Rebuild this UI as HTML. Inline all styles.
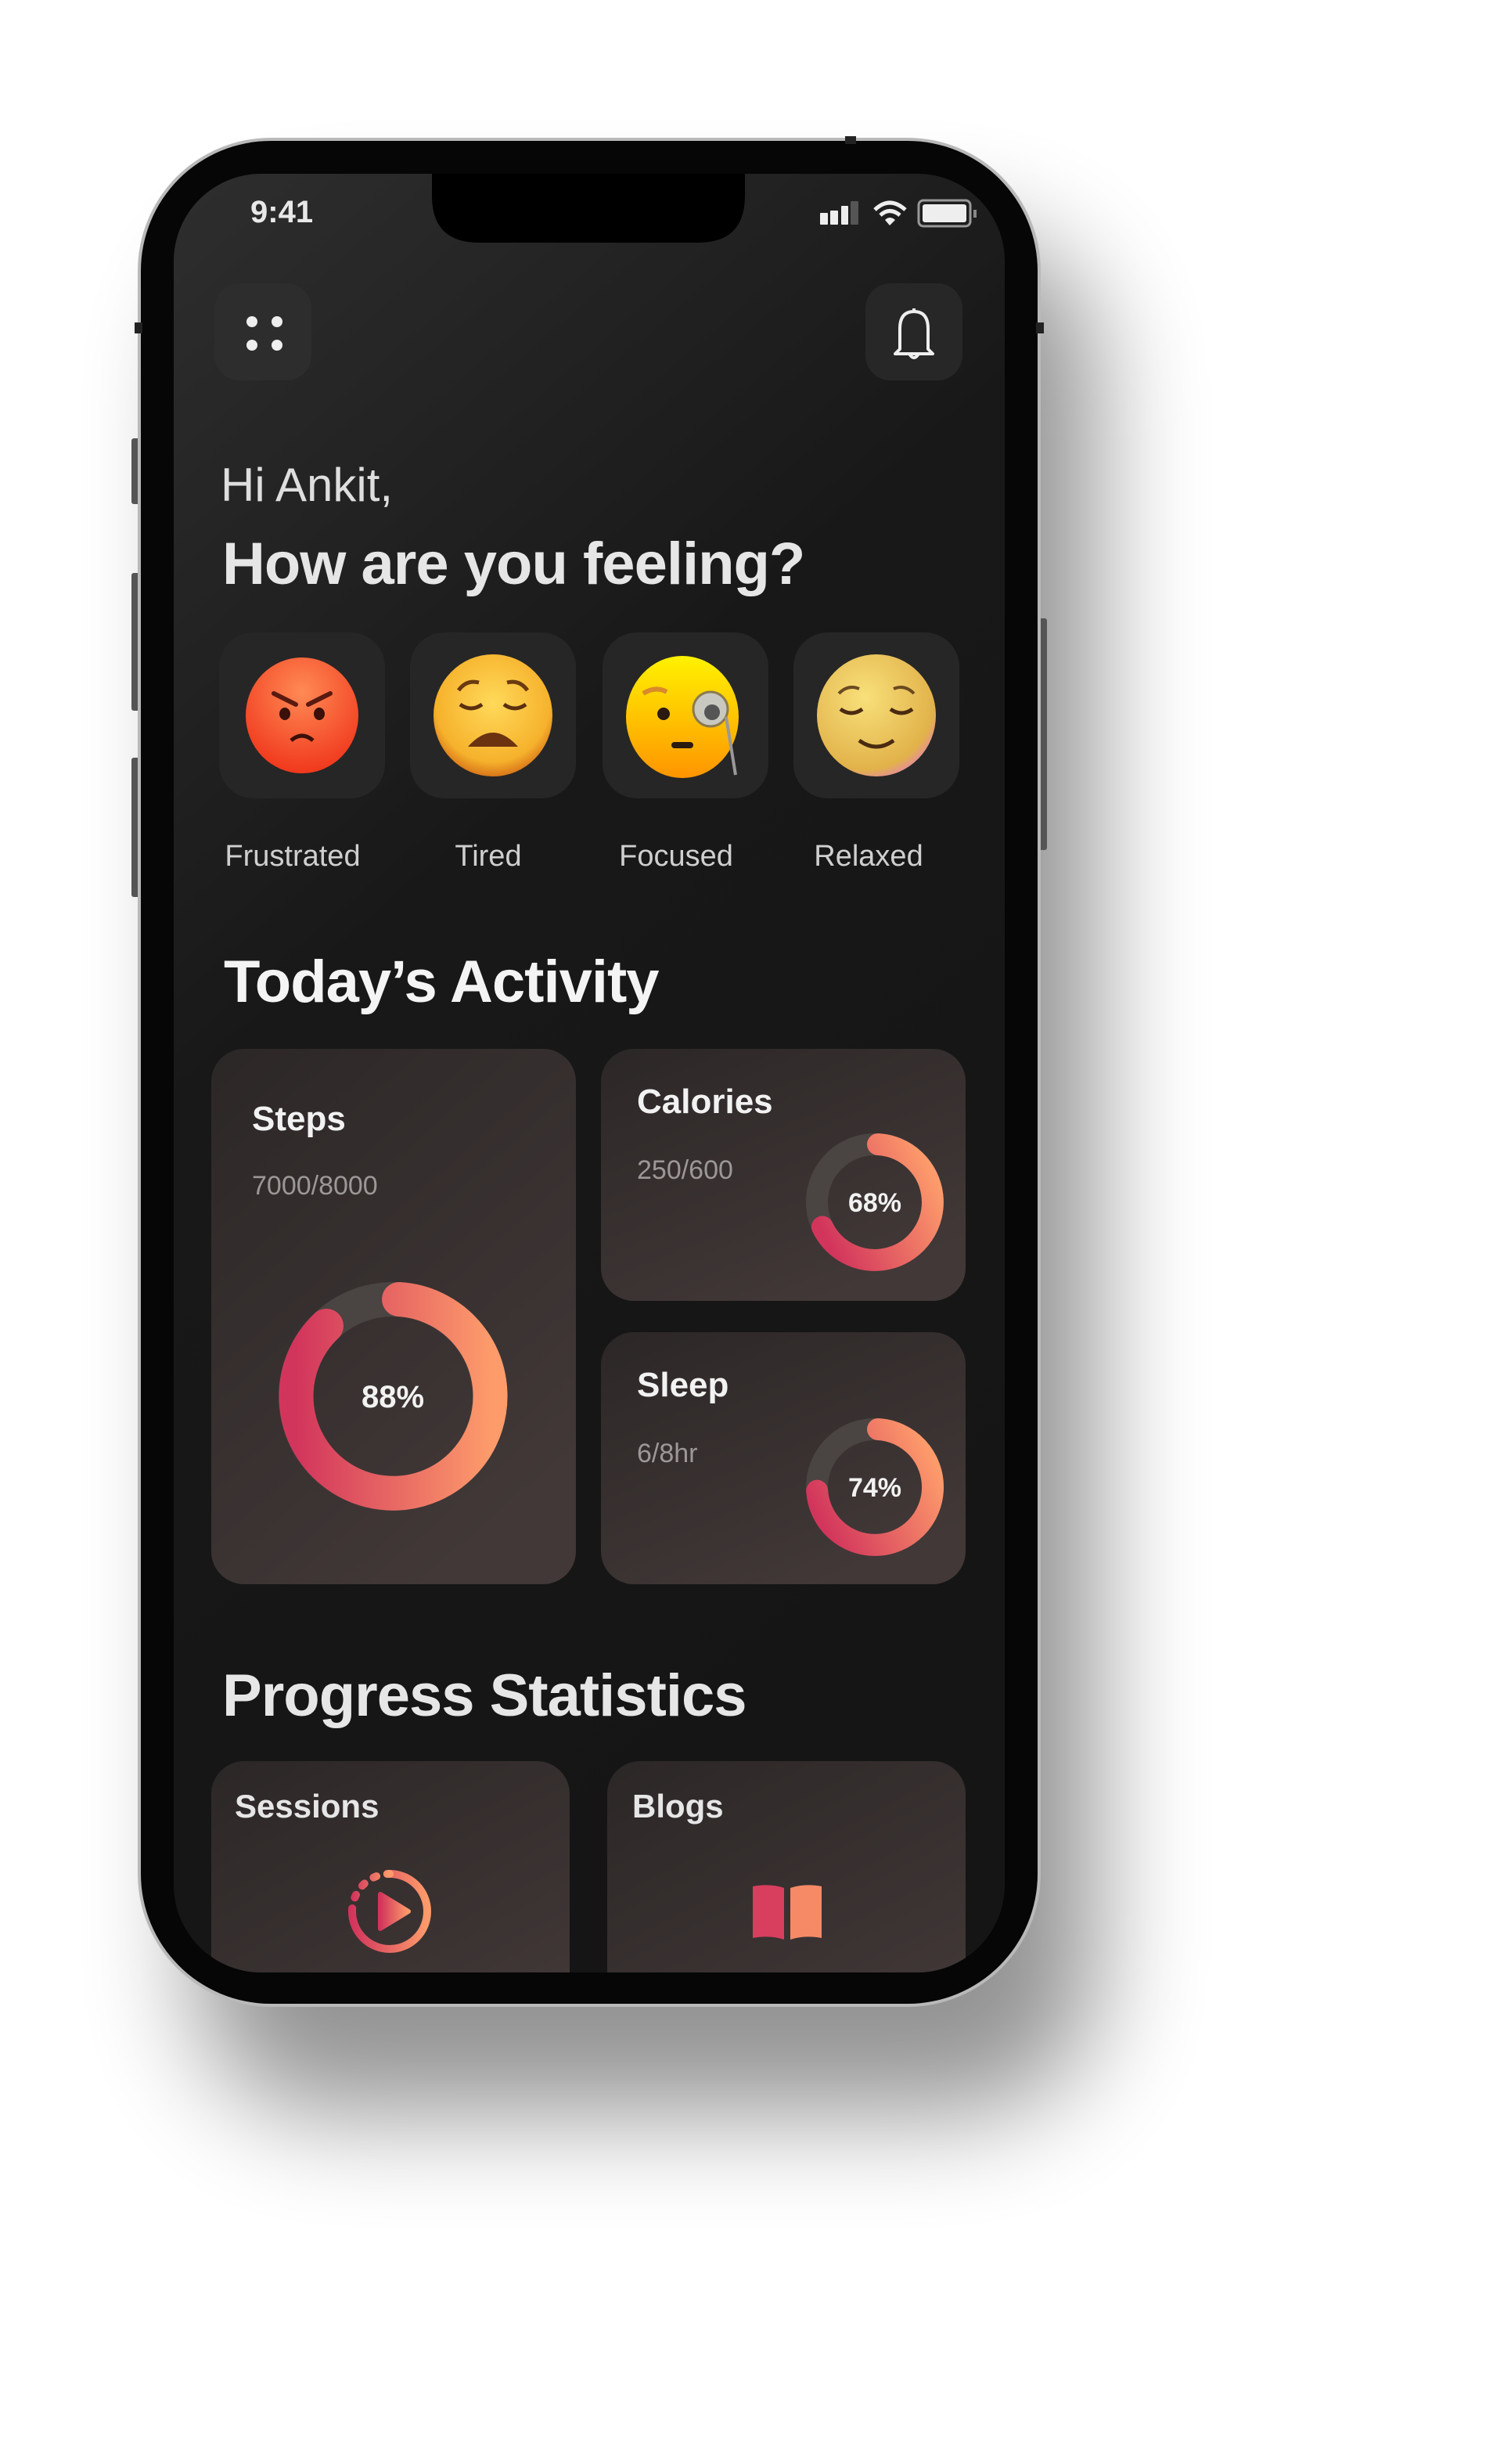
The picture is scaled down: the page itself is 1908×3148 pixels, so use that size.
<!DOCTYPE html>
<html><head><meta charset="utf-8"><style>html,body{margin:0;padding:0;background:#fff;width:1908px;height:3148px;overflow:hidden}svg{display:block}</style></head>
<body>
<svg width="1908" height="3148" viewBox="0 0 1908 3148" xmlns="http://www.w3.org/2000/svg" font-family="'Liberation Sans', sans-serif">
<defs>
<filter id="sh" x="-40%" y="-30%" width="200%" height="180%"><feGaussianBlur stdDeviation="70"/></filter>
<linearGradient id="scr" x1="0" y1="0" x2="0.4" y2="1"><stop offset="0" stop-color="#2e2e2e"/><stop offset="0.45" stop-color="#181818"/><stop offset="1" stop-color="#151515"/></linearGradient>
<linearGradient id="card" x1="0" y1="0" x2="0.6" y2="1"><stop offset="0" stop-color="#2c2727"/><stop offset="1" stop-color="#413837"/></linearGradient>
<linearGradient id="rg" x1="0" y1="0" x2="1" y2="0"><stop offset="0" stop-color="#d2355c"/><stop offset="1" stop-color="#fd9b6b"/></linearGradient>
<linearGradient id="rg2" x1="0" y1="0.75" x2="1" y2="0.25"><stop offset="0" stop-color="#d2355c"/><stop offset="1" stop-color="#fd9b6b"/></linearGradient>
<radialGradient id="ang" cx="0.5" cy="0.3" r="0.7"><stop offset="0" stop-color="#ff8a55"/><stop offset="1" stop-color="#f0381c"/></radialGradient>
<radialGradient id="tir" cx="0.5" cy="0.4" r="0.6"><stop offset="0" stop-color="#ffd95a"/><stop offset="0.8" stop-color="#f6b22c"/><stop offset="1" stop-color="#d9761a"/></radialGradient>
<linearGradient id="foc" x1="0" y1="0" x2="0" y2="1"><stop offset="0" stop-color="#fff200"/><stop offset="1" stop-color="#ff9500"/></linearGradient>
<radialGradient id="rel" cx="0.4" cy="0.35" r="0.7"><stop offset="0" stop-color="#f8e07a"/><stop offset="0.85" stop-color="#e2b24a"/><stop offset="1" stop-color="#e58aa0"/></radialGradient>
<clipPath id="sc"><rect x="222" y="222" width="1062" height="2298" rx="112"/></clipPath>
</defs>
<rect x="250" y="300" width="1150" height="2400" rx="170" fill="#000" opacity="0.42" filter="url(#sh)"/>
<rect x="168" y="560" width="12" height="84" rx="3" fill="#555"/>
<rect x="168" y="732" width="12" height="176" rx="3" fill="#555"/>
<rect x="168" y="968" width="12" height="178" rx="3" fill="#555"/>
<rect x="1326" y="790" width="12" height="296" rx="3" fill="#555"/>
<rect x="176" y="176" width="1154" height="2388" rx="170" fill="#b9b9b9"/>
<rect x="180" y="180" width="1146" height="2380" rx="166" fill="#060606"/>
<rect x="172" y="412" width="10" height="14" fill="#222"/>
<rect x="1324" y="412" width="10" height="14" fill="#222"/>
<rect x="1080" y="174" width="14" height="10" fill="#222"/>
<g clip-path="url(#sc)">
<rect x="222" y="222" width="1062" height="2298" fill="url(#scr)"/>
<path d="M552 222 H952 V250 Q952 310 892 310 H612 Q552 310 552 250 Z" fill="#000"/>
<text x="320" y="284" font-size="40" font-weight="bold" fill="#e8e8e8">9:41</text>
<rect x="1048" y="272" width="10" height="15" rx="1" fill="#eee"/>
<rect x="1061" y="269" width="10" height="18" rx="1" fill="#eee"/>
<rect x="1075" y="263" width="9" height="24" rx="1" fill="#eee"/>
<rect x="1087" y="257" width="10" height="30" rx="1" fill="#555"/>
<path d="M1118 268 Q1137 250 1157 268" stroke="#eee" stroke-width="5" fill="none"/>
<path d="M1125 275 Q1137 264 1150 275" stroke="#eee" stroke-width="5" fill="none"/>
<path d="M1131 281 L1137 288 L1144 281 Q1137 275 1131 281Z" fill="#eee"/>
<rect x="1174" y="256" width="66" height="33" rx="6" fill="none" stroke="#999" stroke-width="3"/>
<rect x="1179" y="261" width="56" height="23" rx="3" fill="#eee"/>
<rect x="1244" y="268" width="4" height="10" fill="#888"/>
<rect x="274" y="362" width="124" height="124" rx="32" fill="#2d2d2d"/>
<circle cx="322" cy="411" r="7" fill="#eee"/><circle cx="354" cy="411" r="7" fill="#eee"/>
<circle cx="322" cy="441" r="7" fill="#eee"/><circle cx="354" cy="441" r="7" fill="#eee"/>
<rect x="1106" y="362" width="124" height="124" rx="32" fill="#272727"/>
<path d="M1150 446 V420 Q1150 398 1168 398 Q1186 398 1186 420 V446 L1192 452 H1144 Z M1168 398 V394" stroke="#eee" stroke-width="4" fill="none" stroke-linejoin="round"/>
<path d="M1162 452 Q1168 462 1174 452" stroke="#eee" stroke-width="4" fill="none"/>
<text x="282" y="640" font-size="60" fill="#dedede">Hi Ankit,</text>
<text x="284" y="746" font-size="76" font-weight="bold" fill="#e6e6e6" letter-spacing="-1">How are you feeling?</text>
<rect x="280" y="808" width="212" height="212" rx="44" fill="#262626"/>
<rect x="524" y="808" width="212" height="212" rx="44" fill="#262626"/>
<rect x="770" y="808" width="212" height="212" rx="44" fill="#262626"/>
<rect x="1014" y="808" width="212" height="212" rx="44" fill="#262626"/>
<ellipse cx="386" cy="914" rx="72" ry="74" fill="url(#ang)"/>
<path d="M350 886 L378 900 M422 886 L394 900" stroke="#5a1a10" stroke-width="6" stroke-linecap="round"/>
<ellipse cx="364" cy="912" rx="7" ry="8" fill="#3a1008"/><ellipse cx="408" cy="912" rx="7" ry="8" fill="#3a1008"/>
<path d="M372 946 Q386 934 400 946" stroke="#3a1008" stroke-width="5" fill="none"/>
<ellipse cx="630" cy="914" rx="76" ry="78" fill="url(#tir)"/>
<path d="M586 882 Q596 868 612 872 M674 882 Q664 868 648 872" stroke="#6a3a10" stroke-width="5" fill="none"/>
<path d="M588 900 Q602 910 616 900 M644 900 Q658 910 672 900" stroke="#5a3010" stroke-width="5" fill="none"/>
<path d="M598 954 Q630 918 662 954 Z" fill="#6b3310"/>
<ellipse cx="872" cy="916" rx="72" ry="78" fill="url(#foc)"/>
<path d="M822 886 Q838 876 852 884" stroke="#d98a2a" stroke-width="6" fill="none"/>
<circle cx="848" cy="912" r="8" fill="#2a1a10"/>
<circle cx="908" cy="906" r="22" fill="#c8c8c0" stroke="#8a7a50" stroke-width="3"/>
<circle cx="910" cy="910" r="10" fill="#555"/>
<path d="M928 916 L940 990" stroke="#999" stroke-width="4"/>
<rect x="858" y="948" width="28" height="8" rx="4" fill="#2a1a10"/>
<ellipse cx="1120" cy="914" rx="76" ry="78" fill="url(#rel)"/>
<path d="M1072 886 Q1084 874 1098 880 M1168 886 Q1156 874 1142 880" stroke="#6a4a20" stroke-width="4" fill="none"/>
<path d="M1074 906 Q1088 916 1102 906 M1138 906 Q1152 916 1166 906" stroke="#4a2a10" stroke-width="5" fill="none"/>
<path d="M1098 946 Q1120 962 1142 946" stroke="#4a2a10" stroke-width="5" fill="none"/>
<g font-size="38" fill="#cfcfcf" text-anchor="middle">
<text x="374" y="1106">Frustrated</text><text x="624" y="1106">Tired</text><text x="864" y="1106">Focused</text><text x="1110" y="1106">Relaxed</text>
</g>
<text x="286" y="1280" font-size="76" font-weight="bold" fill="#f4f4f4" letter-spacing="-1">Today’s Activity</text>
<rect x="270" y="1340" width="466" height="684" rx="42" fill="url(#card)"/>
<rect x="768" y="1340" width="466" height="322" rx="42" fill="url(#card)"/>
<rect x="768" y="1702" width="466" height="322" rx="42" fill="url(#card)"/>
<g font-weight="bold" fill="#f2f2f2" font-size="44">
<text x="322" y="1444">Steps</text><text x="814" y="1422">Calories</text><text x="814" y="1784">Sleep</text>
</g>
<g font-size="34" fill="#9c9898">
<text x="322" y="1526">7000/8000</text><text x="814" y="1506">250/600</text><text x="814" y="1868">6/8hr</text>
</g>
<circle cx="502" cy="1784" r="124" fill="none" stroke="#4a4442" stroke-width="44"/>
<path d="M510 1660 A124 124 0 1 1 417 1694" fill="none" stroke="url(#rg)" stroke-width="44" stroke-linecap="round"/>
<text x="502" y="1798" font-size="40" font-weight="bold" fill="#f2f2f2" text-anchor="middle">88%</text>
<circle cx="1118" cy="1536" r="74" fill="none" stroke="#4a4442" stroke-width="28"/>
<path d="M1122 1462 A74 74 0 1 1 1051 1567.5" fill="none" stroke="url(#rg2)" stroke-width="28" stroke-linecap="round"/>
<text x="1118" y="1548" font-size="34" font-weight="bold" fill="#f2f2f2" text-anchor="middle">68%</text>
<circle cx="1118" cy="1900" r="74" fill="none" stroke="#4a4442" stroke-width="28"/>
<path d="M1122 1826 A74 74 0 1 1 1044.2 1904.6" fill="none" stroke="url(#rg2)" stroke-width="28" stroke-linecap="round"/>
<text x="1118" y="1912" font-size="34" font-weight="bold" fill="#f2f2f2" text-anchor="middle">74%</text>
<text x="284" y="2192" font-size="76" font-weight="bold" fill="#e6e6e6" letter-spacing="-1">Progress Statistics</text>
<rect x="270" y="2250" width="458" height="400" rx="42" fill="url(#card)"/>
<rect x="776" y="2250" width="458" height="400" rx="42" fill="url(#card)"/>
<g font-weight="bold" fill="#e6e6e6" font-size="42">
<text x="300" y="2322">Sessions</text><text x="808" y="2322">Blogs</text>
</g>
<path d="M498 2394 A48 48 0 1 1 450 2442" stroke="url(#rg)" stroke-width="10" fill="none" stroke-linecap="round"/>
<path d="M450 2442 A48 48 0 0 1 498 2394" stroke="url(#rg)" stroke-width="10" fill="none" stroke-linecap="round" stroke-dasharray="4 14"/>
<path d="M486 2420 L522 2442 L486 2464 Z" fill="url(#rg)" stroke="url(#rg)" stroke-width="6" stroke-linejoin="round"/>
<path d="M962 2410 Q984 2406 1002 2412 V2478 Q984 2472 962 2476 Z" fill="#d83e5e"/>
<path d="M1010 2412 Q1028 2406 1050 2410 V2476 Q1028 2472 1010 2478 Z" fill="#f68a66"/>
</g>
</svg>
</body></html>
